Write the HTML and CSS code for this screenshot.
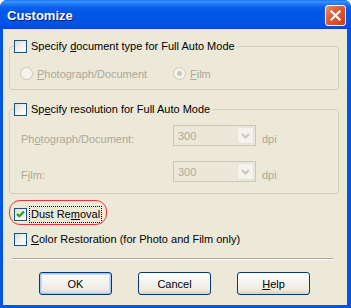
FILE: index.html
```html
<!DOCTYPE html>
<html lang="en">
<head>
    <meta charset="UTF-8">
    <meta name="viewport" content="width=device-width, initial-scale=1.0">
    <title>Customize</title>
    <link rel="stylesheet" href="styles.css">
</head>
<body>
    <div class="window">
        <!-- Title bar -->
        <div class="titlebar">
            <span class="title">Customize</span>
            <button class="close" aria-label="Close">
                <svg width="13" height="13" viewBox="0 0 13 13">
                    <path d="M2.5 2.5 L10.5 10.5 M10.5 2.5 L2.5 10.5" stroke="#fff" stroke-width="2.2" stroke-linecap="square"/>
                </svg>
            </button>
        </div>

        <div class="client">
            <!-- Document type group -->
            <fieldset class="group group-type">
                <legend>
                    <span class="check"></span>
                    <span class="text">Specify <u>d</u>ocument type for Full Auto Mode</span>
                </legend>
                <div class="radio-row">
                    <label class="radio-item first"><span class="radio"></span><span><u>P</u>hotograph/Document</span></label>
                    <label class="radio-item"><span class="radio selected"></span><span><u>F</u>ilm</span></label>
                </div>
            </fieldset>

            <!-- Resolution group -->
            <fieldset class="group group-res">
                <legend>
                    <span class="check"></span>
                    <span class="text">Sp<u>e</u>cify resolution for Full Auto Mode</span>
                </legend>
                <div class="combo-row">
                    <span class="combo-label">Ph<u>o</u>tograph/Document:</span>
                    <div class="combo">
                        <span class="combo-value">300</span>
                        <span class="combo-btn">
                            <svg width="9" height="6" viewBox="0 0 9 6"><path d="M1 1 L4.5 4.5 L8 1" fill="none" stroke="#c9c7ba" stroke-width="2"/></svg>
                        </span>
                    </div>
                    <span class="unit">dpi</span>
                </div>
                <div class="combo-row second">
                    <span class="combo-label">F<u>i</u>lm:</span>
                    <div class="combo">
                        <span class="combo-value">300</span>
                        <span class="combo-btn">
                            <svg width="9" height="6" viewBox="0 0 9 6"><path d="M1 1 L4.5 4.5 L8 1" fill="none" stroke="#c9c7ba" stroke-width="2"/></svg>
                        </span>
                    </div>
                    <span class="unit">dpi</span>
                </div>
            </fieldset>

            <!-- Options -->
            <div class="option dust">
                <span class="check checked">
                    <svg width="11" height="11" viewBox="0 0 11 11"><path d="M2 5 L4.3 7.3 L9 2.6" fill="none" stroke="#21a121" stroke-width="2.2"/></svg>
                </span>
                <span class="focus">Dust Re<u>m</u>oval</span>
                <span class="highlight"></span>
            </div>
            <div class="option color">
                <span class="check"></span>
                <span class="text"><u>C</u>olor Restoration (for Photo and Film only)</span>
            </div>

            <div class="separator"></div>

            <div class="buttons">
                <button class="button default">OK</button>
                <button class="button">Cancel</button>
                <button class="button"><u>H</u>elp</button>
            </div>
        </div>
    </div>
</body>
</html>
```

FILE: styles.css
```css
body {
    margin: 0;
    padding: 0;
    background: #fff;
    font-family: "Liberation Sans", Arial, sans-serif;
    font-size: 11px;
}

.window {
    width: 351px;
    height: 308px;
    display: flex;
    flex-direction: column;
    background: #0055e5;
    border-radius: 7px 7px 0 0;
    overflow: hidden;
}

.titlebar {
    height: 29px;
    flex-shrink: 0;
    display: flex;
    align-items: center;
    justify-content: space-between;
    padding: 0 5px 0 7px;
    box-sizing: border-box;
    background: linear-gradient(to bottom, #0a5ee8 0px, #3d95ff 1px, #2a84fc 3px, #0a62ec 7px, #0057e6 12px, #0055e5 21px, #0050dc 26px, #0046d2 29px);
}

.title {
    color: #fff;
    font-weight: bold;
    font-size: 13px;
    text-shadow: 1px 1px 0 #0a1883;
    padding-top: 1px;
}

.close {
    width: 21px;
    height: 21px;
    padding: 0;
    border: 1px solid #fff;
    border-radius: 3px;
    background: linear-gradient(135deg, #f09074 0%, #e2603e 35%, #d54a23 75%, #c23c18 100%);
    display: flex;
    align-items: center;
    justify-content: center;
    margin-top: 1px;
}

.client {
    flex: 1;
    margin: 0 4px 3px 3px;
    background: #ece9d8;
    display: flex;
    flex-direction: column;
}

/* Group boxes */
.group {
    margin: 0 8px 0 6px;
    padding: 0;
    border: 1px solid #d0d0bf;
    border-radius: 3px;
    min-width: 0;
}

.group-type {
    margin-top: 11px;
}

.group-res {
    margin-top: 13px;
}

legend {
    margin-left: 4px;
    padding: 0 2px 0 0;
    display: flex;
    align-items: center;
    gap: 4px;
    height: 13px;
    line-height: 13px;
}

.check {
    width: 11px;
    height: 11px;
    border: 1px solid #1c5180;
    background: linear-gradient(135deg, #dcdcd7 0%, #f4f4f1 60%, #ffffff 100%);
    display: inline-flex;
    align-items: center;
    justify-content: center;
    flex-shrink: 0;
}

/* Radios */
.radio-row {
    display: flex;
    padding: 14px 0 9px 10px;
}

.radio-item {
    display: flex;
    align-items: center;
    gap: 4px;
    height: 13px;
    color: #aca899;
}

.radio-item.first {
    width: 153px;
}

.radio {
    width: 11px;
    height: 11px;
    border: 1px solid #cac8bb;
    border-radius: 50%;
    background: #f5f4ea;
    display: inline-flex;
    align-items: center;
    justify-content: center;
}

.radio.selected::after {
    content: "";
    width: 5px;
    height: 5px;
    border-radius: 50%;
    background: #cac8bb;
}

/* Combos */
.combo-row {
    display: flex;
    align-items: flex-end;
    padding: 9px 0 0 11px;
    color: #aca899;
}

.combo-row.second {
    padding-top: 15px;
    padding-bottom: 11px;
}

.combo-label {
    width: 152px;
    line-height: 13px;
}

.combo {
    width: 83px;
    height: 21px;
    box-sizing: border-box;
    border: 1px solid #c9c7ba;
    background: #ebe8d9;
    display: flex;
    align-items: center;
    justify-content: space-between;
    padding: 1px;
}

.combo-value {
    padding-left: 3px;
}

.combo-btn {
    width: 17px;
    height: 17px;
    box-sizing: border-box;
    background: #f4f3ee;
    border: 1px solid #e5e3d9;
    border-radius: 2px;
    display: flex;
    align-items: center;
    justify-content: center;
}

.unit {
    margin-left: 6px;
    line-height: 13px;
}

/* Check options */
.option {
    display: flex;
    align-items: center;
    height: 13px;
    padding-left: 11px;
    line-height: 13px;
}

.option.dust {
    margin-top: 14px;
    position: relative;
}

.option.color {
    margin-top: 12px;
    gap: 4px;
}

.focus {
    margin-left: 2px;
    padding: 1px 1px;
    border: 1px dotted #000;
    line-height: 13px;
}

.highlight {
    position: absolute;
    left: 6px;
    top: -8px;
    width: 98px;
    height: 25px;
    box-sizing: border-box;
    border: 1.5px solid #e53838;
    border-radius: 11px;
}

.separator {
    margin: 12px 14px 0 9px;
    height: 1px;
    background: #aca899;
    box-shadow: 0 1px 0 #fff;
}

.buttons {
    display: flex;
    gap: 26px;
    padding-left: 36px;
    margin-top: 13px;
}

.button {
    width: 73px;
    height: 23px;
    padding: 0;
    font-family: inherit;
    font-size: 11px;
    color: #000;
    border: 1px solid #003c74;
    border-radius: 3px;
    background: linear-gradient(to bottom, #ffffff 0%, #f5f4ef 40%, #ecebe6 80%, #d6d0c5 100%);
}

.button.default {
    box-shadow: inset 0 0 0 1px #a9c4f2, inset 0 0 0 2px #cfdcf6;
}
```
